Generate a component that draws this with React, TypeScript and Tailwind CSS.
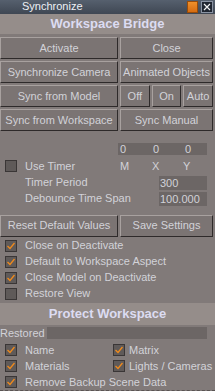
import React from "react";

const font = { fontFamily: '"Liberation Sans", Arial, sans-serif' };

function Btn({ children, className = "" }: { children: React.ReactNode; className?: string }) {
  return (
    <div
      className={`flex items-center justify-center h-[22px] bg-[#7b7473] text-[#d2d2d8] text-[11px] border border-t-[#a8a19f] border-l-[#a8a19f] border-b-[#2e2a2a] border-r-[#2e2a2a] whitespace-nowrap overflow-hidden ${className}`}
    >
      {children}
    </div>
  );
}

function Check({ checked }: { checked: boolean }) {
  return (
    <div className="w-[12px] h-[12px] bg-[#5f5a59] border border-[#3a3636] flex items-center justify-center shrink-0">
      {checked && (
        <svg width="10" height="10" viewBox="0 0 10 10">
          <path d="M1.5 5 L4 7.5 L8.5 2" stroke="#f08a1c" strokeWidth="1.3" fill="none" />
        </svg>
      )}
    </div>
  );
}

function CheckRow({
  checked,
  label,
  className = "",
  gap = "ml-[8px]",
}: {
  checked: boolean;
  label: string;
  className?: string;
  gap?: string;
}) {
  return (
    <div className={`flex items-center h-[16px] ${className}`}>
      <Check checked={checked} />
      <span className={`${gap} text-[11px] text-[#d2d2d8] whitespace-nowrap`}>{label}</span>
    </div>
  );
}

export default function App() {
  return (
    <div className="w-[215px] h-[391px] bg-[#817a79] flex flex-col overflow-hidden" style={font}>
      {/* title bar */}
      <div className="h-[15px] bg-gradient-to-b from-[#56606e] to-[#3f4753] flex items-center relative">
        <span className="ml-[22px] text-[11px] text-[#eef0f5] leading-none">Synchronize</span>
        <div className="ml-auto mr-[2px] flex items-center gap-[3px]">
          <div className="w-[11px] h-[12px] bg-gradient-to-b from-[#f0902a] to-[#d66c10] border border-[#9a4c08]" />
          <div className="w-[12px] h-[12px] bg-[#1f2530] border border-[#8a93a3] flex items-center justify-center">
            <svg width="8" height="8" viewBox="0 0 8 8">
              <path d="M1 1 L7 7 M7 1 L1 7" stroke="#f2f2f2" strokeWidth="1.2" />
            </svg>
          </div>
        </div>
      </div>

      {/* header */}
      <div className="h-[22px] bg-[#958d8a] flex items-center justify-center text-[13px] font-bold text-[#dcdcf2]">
        Workspace Bridge
      </div>

      <div className="mt-[3px] flex flex-col gap-[2px] pr-[2px]">
        <div className="flex gap-[2px]">
          <Btn className="w-[118px]">Activate</Btn>
          <Btn className="flex-1">Close</Btn>
        </div>
        <div className="flex gap-[2px]">
          <Btn className="w-[118px]">Synchronize Camera</Btn>
          <Btn className="flex-1">Animated Objects</Btn>
        </div>
        <div className="flex gap-[2px]">
          <Btn className="w-[118px]">Sync from Model</Btn>
          <div className="flex-1 flex gap-[2px]">
            <Btn className="flex-1">Off</Btn>
            <Btn className="flex-1">On</Btn>
            <Btn className="flex-1">Auto</Btn>
          </div>
        </div>
        <div className="flex gap-[2px]">
          <Btn className="w-[118px]">Sync from Workspace</Btn>
          <Btn className="flex-1">Sync Manual</Btn>
        </div>
      </div>

      {/* M X Y */}
      <div className="mt-[12px] ml-[118px] w-[89px] h-[12px] bg-[#6c6665] flex items-center text-[11px] text-[#d2d2d8] leading-none">
        <span className="ml-[2px] w-[33px]">0</span>
        <span className="w-[32px]">0</span>
        <span>0</span>
      </div>
      <div className="mt-[5px] flex items-center h-[13px]">
        <div className="ml-[5px]">
          <Check checked={false} />
        </div>
        <span className="ml-[8px] text-[11px] text-[#d2d2d8] w-[95px]">Use Timer</span>
        <span className="text-[11px] text-[#d2d2d8] w-[32px]">M</span>
        <span className="text-[11px] text-[#d2d2d8] w-[31px]">X</span>
        <span className="text-[11px] text-[#d2d2d8]">Y</span>
      </div>
      <div className="mt-[3px] flex items-center h-[14px]">
        <span className="ml-[25px] text-[11px] text-[#d2d2d8] w-[134px]">Timer Period</span>
        <div className="w-[48px] h-[14px] bg-[#6c6665] text-[11px] text-[#d2d2d8] pl-[1px] leading-[14px]">300</div>
      </div>
      <div className="mt-[2px] flex items-center h-[14px]">
        <span className="ml-[25px] text-[11px] text-[#d2d2d8] w-[134px] whitespace-nowrap">Debounce Time Span</span>
        <div className="w-[48px] h-[14px] bg-[#6c6665] text-[11px] text-[#d2d2d8] pl-[1px] leading-[14px]">100.000</div>
      </div>

      <div className="mt-[9px] flex gap-[2px] pr-[2px]">
        <Btn className="w-[118px]">Reset Default Values</Btn>
        <Btn className="flex-1">Save Settings</Btn>
      </div>

      <div className="mt-[1px] ml-[5px] flex flex-col">
        <CheckRow checked label="Close on Deactivate" />
        <CheckRow checked label="Default to Workspace Aspect" />
        <CheckRow checked label="Close Model on Deactivate" />
        <CheckRow checked={false} label="Restore View" />
      </div>

      <div className="mt-[1px] h-[24px] bg-[#958d8a] flex items-center justify-center text-[13px] font-bold text-[#dcdcf2]">
        Protect Workspace
      </div>

      <div className="mt-[2px] flex items-center h-[12px]">
        <span className="text-[11px] text-[#d2d2d8] w-[47px]">Restored</span>
        <div className="w-[160px] h-[12px] bg-[#6c6665]" />
      </div>

      <div className="mt-[3px] ml-[5px] flex flex-col">
        <div className="flex">
          <CheckRow checked label="Name" className="w-[108px]" />
          <CheckRow checked label="Matrix" gap="ml-[4px]" />
        </div>
        <div className="flex">
          <CheckRow checked label="Materials" className="w-[108px]" />
          <CheckRow checked label="Lights / Cameras" gap="ml-[4px]" />
        </div>
        <CheckRow checked label="Remove Backup Scene Data" />
      </div>

      <div className="mt-auto h-[1px] border-b border-dashed border-[#5a5453]" />
    </div>
  );
}
